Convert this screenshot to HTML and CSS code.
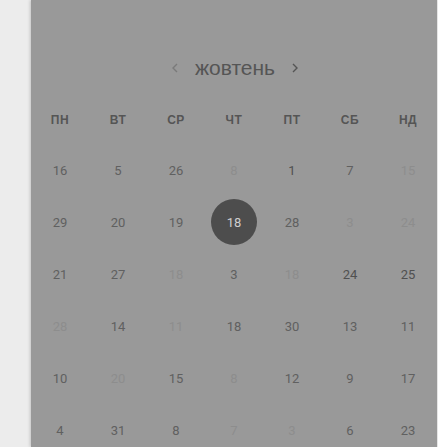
FILE: index.html
```html
<!DOCTYPE html>
<html lang="uk">
<head>
<meta charset="utf-8">
<link rel="stylesheet" href="styles.css">
</head>
<body>
<div class="panel">
  <div class="month-nav">
    <svg class="chev chev-prev" width="8" height="12" viewBox="0 0 8 12"><polyline points="6,2 2,6 6,10" fill="none" stroke="currentColor" stroke-width="1.4"/></svg>
    <span class="month">жовтень</span>
    <svg class="chev chev-next" width="8" height="12" viewBox="0 0 8 12"><polyline points="2,2 6,6 2,10" fill="none" stroke="currentColor" stroke-width="1.4"/></svg>
  </div>
  <div class="weekdays">
    <span>ПН</span><span>ВТ</span><span>СР</span><span>ЧТ</span><span>ПТ</span><span>СБ</span><span>НД</span>
  </div>
  <div class="days">
    <span>16</span><span>5</span><span>26</span><span class="muted">8</span><span class="dark">1</span><span>7</span><span class="muted">15</span>
    <span>29</span><span>20</span><span>19</span><span class="selected"><b>18</b></span><span>28</span><span class="muted">3</span><span class="muted">24</span>
    <span>21</span><span>27</span><span class="muted">18</span><span>3</span><span class="muted">18</span><span class="dark">24</span><span class="dark">25</span>
    <span class="muted">28</span><span>14</span><span class="muted">11</span><span>18</span><span>30</span><span>13</span><span>11</span>
    <span>10</span><span class="muted">20</span><span>15</span><span class="muted">8</span><span>12</span><span>9</span><span>17</span>
    <span>4</span><span>31</span><span>8</span><span class="muted">7</span><span class="muted">3</span><span>6</span><span>23</span>
  </div>
</div>
</body>
</html>
```
FILE: styles.css
```css
html, body {
  margin: 0;
  padding: 0;
  height: 100%;
  overflow: hidden;
}
body {
  background: #ececec;
  font-family: "Liberation Sans", Arial, sans-serif;
}
.panel {
  margin-left: 31px;
  width: 406px;
  height: 447px;
  background: #999999;
  box-shadow: -1px 0 3px rgba(0, 0, 0, 0.18);
  padding-top: 56px;
  box-sizing: border-box;
}
.month-nav {
  height: 24px;
  display: flex;
  align-items: center;
  justify-content: center;
  gap: 16px;
  padding-left: 2px;
}
.month {
  font-size: 21px;
  line-height: 24px;
  color: #555555;
}
.chev { display: block; }
.chev-prev { color: #7a7a7a; }
.chev-next { color: #555555; }
.weekdays {
  margin-top: 30px;
  display: grid;
  grid-template-columns: repeat(7, 58px);
  height: 20px;
  align-items: center;
  text-align: center;
  font-size: 12px;
  font-weight: bold;
  color: #555555;
  letter-spacing: 0.5px;
}
.days {
  margin-top: 14px;
  display: grid;
  grid-template-columns: repeat(7, 58px);
  grid-auto-rows: 52px;
  font-family: Roboto, "Liberation Sans", sans-serif;
  font-size: 13px;
  color: #606060;
}
.days span {
  display: flex;
  align-items: center;
  justify-content: center;
}
.days .muted { color: #8d8d8d; }
.days .dark { color: #505050; }
.days .selected b {
  font-weight: normal;
  width: 46px;
  height: 46px;
  border-radius: 50%;
  background: #4d4d4d;
  color: #cfcfcf;
  display: flex;
  align-items: center;
  justify-content: center;
}
```
